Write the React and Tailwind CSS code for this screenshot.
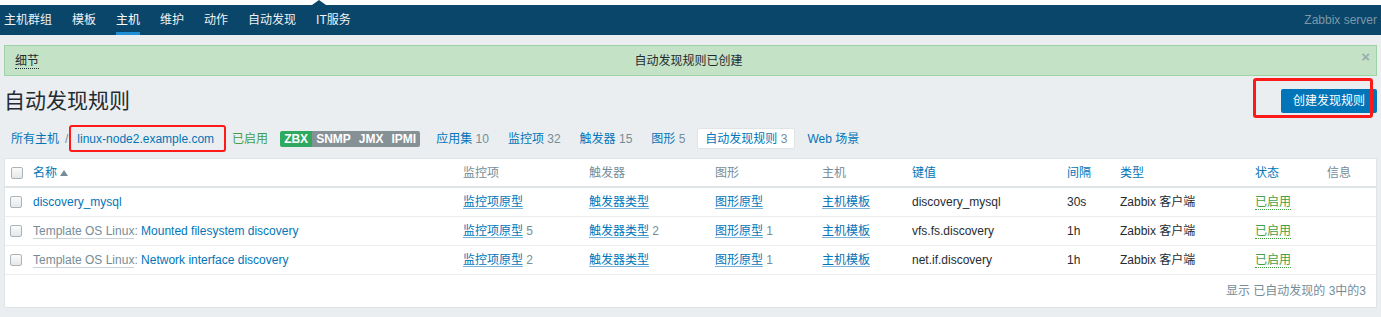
const FONT = { fontFamily: '"Liberation Sans", "Noto Sans CJK SC", Arial, sans-serif' };

const navItems = ['主机群组', '模板', '主机', '维护', '动作', '自动发现', 'IT服务'];

const rows = [
  {
    prefix: null,
    name: 'discovery_mysql',
    items: null,
    triggers: null,
    graphs: null,
    key: 'discovery_mysql',
    interval: '30s',
  },
  {
    prefix: 'Template OS Linux',
    name: 'Mounted filesystem discovery',
    items: 5,
    triggers: 2,
    graphs: 1,
    key: 'vfs.fs.discovery',
    interval: '1h',
  },
  {
    prefix: 'Template OS Linux',
    name: 'Network interface discovery',
    items: 2,
    triggers: null,
    graphs: 1,
    key: 'net.if.discovery',
    interval: '1h',
  },
];

const cols = 'grid grid-cols-[28px_430px_126px_126px_107px_90px_155px_53px_135px_72px_1fr] items-center';

function Checkbox() {
  return (
    <span className="block w-3 h-3 rounded-[2px] border border-[#a9b4ba] bg-gradient-to-b from-[#fbfbfb] to-[#e4e7e9]" />
  );
}

function ProtoLink({ label, count }) {
  return (
    <span>
      <span className="text-[#0275b8] underline underline-offset-2 decoration-[#7db3d6]">{label}</span>
      {count != null && <span className="text-[#768d99]"> {count}</span>}
    </span>
  );
}

export default function App() {
  return (
    <div className="w-[1381px] h-[317px] overflow-hidden bg-[#ebeef0] text-[12px] text-[#1f2c33]" style={FONT}>
      {/* top strip */}
      <div className="h-[5px] bg-white relative">
        <span className="absolute left-[312px] bottom-0 w-0 h-0 border-x-[7px] border-x-transparent border-b-[5px] border-b-[#0a466a]" />
      </div>

      {/* sub nav */}
      <div className="h-[30px] bg-[#0a466a] flex items-stretch justify-between pl-[4px] pr-[4px]">
        <div className="flex gap-5">
          {navItems.map((n) => (
            <div
              key={n}
              className={
                n === '主机'
                  ? 'flex items-center pt-[3px] border-b-[3px] border-[#1f8ed6] text-white'
                  : 'flex items-center text-[#eef2f4]'
              }
            >
              {n}
            </div>
          ))}
        </div>
        <div className="flex items-center text-[#7d98a8]">Zabbix server</div>
      </div>

      <div className="px-[4px]">
        {/* message */}
        <div className="mt-[10px] h-[31px] border border-[#9dd3a3] bg-[#c3e2c6] grid grid-cols-[1fr_auto_1fr] items-center">
          <div className="pl-[10px]">
            <span className="border-b border-dotted border-[#1f2c33]">细节</span>
          </div>
          <div className="pr-[4px]">自动发现规则已创建</div>
          <div className="flex justify-end pr-[6px] pb-[8px] text-[15px] font-bold text-[#9aaeb0]">×</div>
        </div>

        {/* title row */}
        <div className="mt-[13px] flex items-center justify-between">
          <h1 className="text-[21px] leading-[24px] text-[#1f2c33]">自动发现规则</h1>
          <div className="relative">
            <button className="h-6 px-3 bg-[#0275b8] text-white rounded-[2px]">创建发现规则</button>
            <span className="absolute left-[-28px] top-[-11px] w-[120px] h-[40px] border-[3px] border-[#ff1a1a] rounded-[3px]" />
          </div>
        </div>

        {/* breadcrumbs */}
        <div className="mt-[12px] h-[27px] flex items-center pl-[7px]">
          <span className="text-[#0275b8]">所有主机</span>
          <span className="ml-[6px] text-[#768d99]">/</span>
          <span className="ml-[1px] h-[27px] flex items-center pl-[6px] pr-[10px] border-2 border-[#ff1a1a] rounded-[3px] text-[#0275b8]">
            linux-node2.example.com
          </span>
          <span className="ml-[6px] text-[#429e47]">已启用</span>
          <div className="ml-[12px] flex h-4 text-white font-bold leading-4">
            <span className="px-1 bg-[#2fa860] rounded-l-[2px]">ZBX</span>
            <span className="px-1 bg-[#869196]">SNMP</span>
            <span className="px-1 bg-[#869196]">JMX</span>
            <span className="px-1 bg-[#869196] rounded-r-[2px]">IPMI</span>
          </div>
          <div className="ml-[9px] flex items-center gap-[5px]">
            <span className="px-[7px]"><span className="text-[#0275b8]">应用集</span> <span className="text-[#768d99]">10</span></span>
            <span className="px-[7px]"><span className="text-[#0275b8]">监控项</span> <span className="text-[#768d99]">32</span></span>
            <span className="px-[7px]"><span className="text-[#0275b8]">触发器</span> <span className="text-[#768d99]">15</span></span>
            <span className="px-[7px]"><span className="text-[#0275b8]">图形</span> <span className="text-[#768d99]">5</span></span>
            <span className="px-[7px] h-[21px] flex items-center bg-white border border-[#dfe4e7] rounded-[2px]">
              <span className="text-[#0275b8]">自动发现规则</span>&nbsp;<span className="text-[#768d99]">3</span>
            </span>
            <span className="px-[7px] text-[#0275b8]">Web 场景</span>
          </div>
        </div>

        {/* table panel */}
        <div className="mt-[6px] bg-white border border-[#dfe4e7]">
          <div className={`${cols} h-[29px] border-b-2 border-[#dfe4e7]`}>
            <div className="pl-[6px]"><Checkbox /></div>
            <div className="flex items-center text-[#0275b8]">
              名称
              <svg className="ml-[3px]" width="8" height="6" viewBox="0 0 8 6">
                <path d="M0 6 L4 0 L8 6 Z" fill="#768d99" />
              </svg>
            </div>
            <div className="text-[#768d99]">监控项</div>
            <div className="text-[#768d99]">触发器</div>
            <div className="text-[#768d99]">图形</div>
            <div className="text-[#768d99]">主机</div>
            <div className="text-[#0275b8]">键值</div>
            <div className="text-[#0275b8]">间隔</div>
            <div className="text-[#0275b8]">类型</div>
            <div className="text-[#0275b8]">状态</div>
            <div className="text-[#768d99]">信息</div>
          </div>

          {rows.map((r) => (
            <div key={r.name} className={`${cols} h-[29px] border-b border-[#ebeef0]`}>
              <div className="pl-[5px]"><Checkbox /></div>
              <div>
                {r.prefix && (
                  <>
                    <span className="text-[#768d99] border-b border-[#c9d3d8]">{r.prefix}</span>
                    <span className="text-[#768d99]">: </span>
                  </>
                )}
                <span className="text-[#0275b8]">{r.name}</span>
              </div>
              <div><ProtoLink label="监控项原型" count={r.items} /></div>
              <div><ProtoLink label="触发器类型" count={r.triggers} /></div>
              <div><ProtoLink label="图形原型" count={r.graphs} /></div>
              <div><ProtoLink label="主机模板" /></div>
              <div>{r.key}</div>
              <div>{r.interval}</div>
              <div>Zabbix 客户端</div>
              <div>
                <span className="text-[#429e47] border-b border-dotted border-[#429e47]">已启用</span>
              </div>
              <div />
            </div>
          ))}

          <div className="h-[32px] flex items-center justify-end pr-[10px] text-[#768d99]">
            显示 已自动发现的 3中的3
          </div>
        </div>
      </div>
    </div>
  );
}
